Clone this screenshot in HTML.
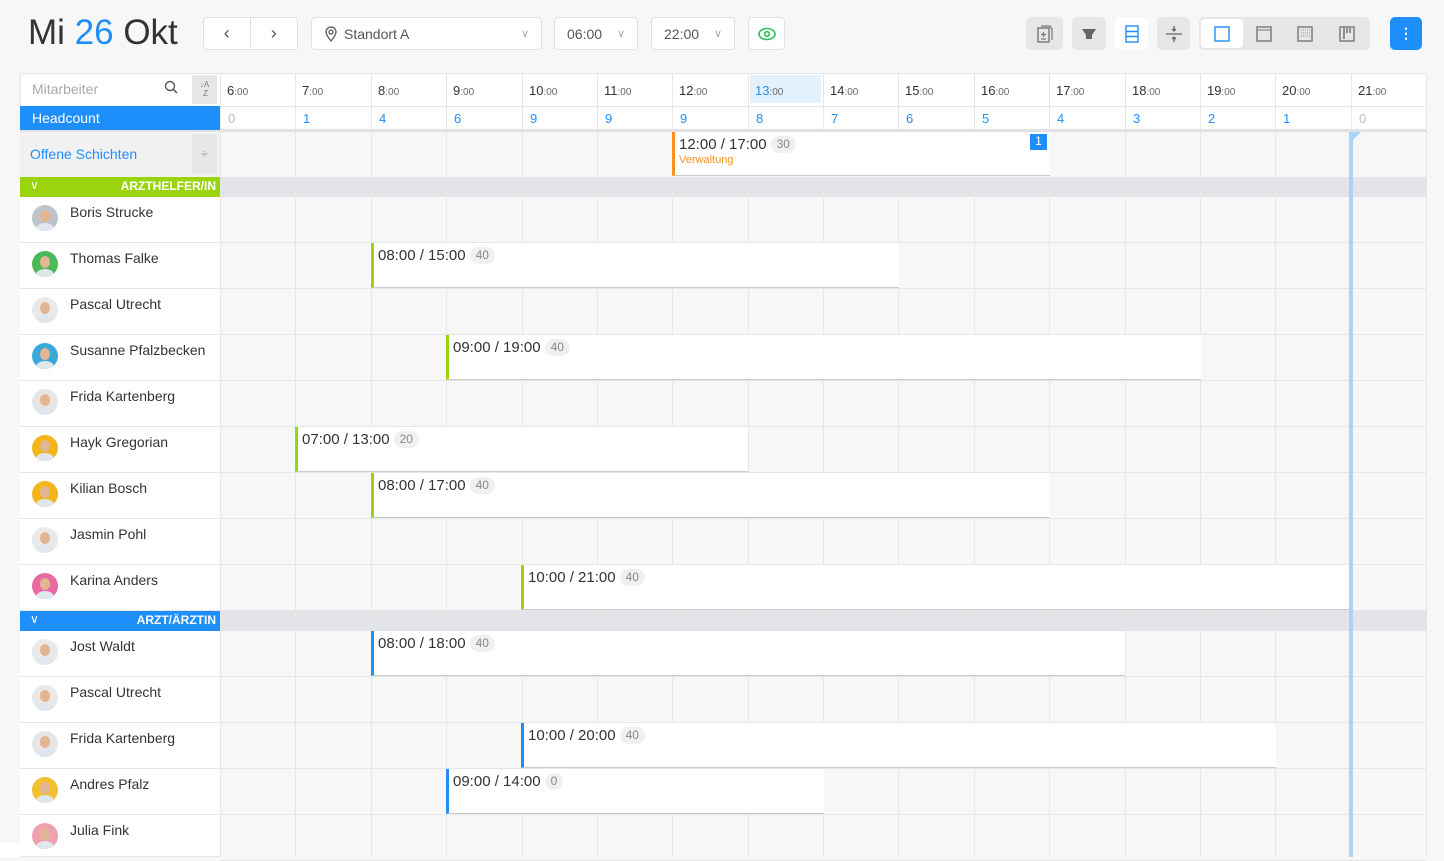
<!DOCTYPE html>
<html><head><meta charset="utf-8"><style>
*{box-sizing:border-box;margin:0;padding:0}
body{width:1444px;height:857px;background:#f7f7f7;font-family:"Liberation Sans",sans-serif;position:relative;overflow:hidden;color:#333}
.a{position:absolute}
.btn{position:absolute;background:#fff;border:1px solid #e0e0e0;border-radius:4px;top:17px;height:33px;font-size:14px;color:#555;display:flex;align-items:center}
.ib{position:absolute;top:17px;height:33px;border-radius:5px;background:#e7e7e7;display:flex;align-items:center;justify-content:center}
.vl{position:absolute;width:1px;background:#e6e6e6}
.hr{position:absolute;font-size:13px;color:#333;top:83px}
.hr small{font-size:10px;color:#666}
.hc{position:absolute;top:111px;font-size:13px;color:#1e8ffa}
.name{position:absolute;left:20px;width:200px;background:#fff;border-bottom:1px solid #e6e6e6;font-size:14px;color:#333}
.name span{position:absolute;left:50px;top:7px}
.av{position:absolute;left:12px;top:8px;width:26px;height:26px;border-radius:50%;overflow:hidden}
.av i{position:absolute;left:8px;top:5px;width:10px;height:12px;border-radius:50%;background:#e2b593}
.av b{position:absolute;left:4px;top:18px;width:18px;height:12px;border-radius:50%;background:#dfe6ee}
.rowl{position:absolute;left:220px;width:1206px;height:1px;background:#e6e6e6}
.sh{position:absolute;background:#fff;border-left:3px solid #99d40e;border-bottom:1px solid #ccc;font-size:15px;color:#333;padding:4px 0 0 4px}
.sh em{font-style:normal;display:inline-block;background:#f0f0f0;color:#888;border-radius:9px;padding:0 6px;font-size:12px;margin-left:4px;line-height:17px;vertical-align:1px}
.blue{border-left-color:#1e8ffa}
</style></head><body>
<div class="a" style="left:28px;top:13px;font-size:35px;color:#333">Mi <span style="color:#1e8ffa">26</span> Okt</div>
<div class="btn" style="left:203px;width:95px"><div style="width:47px;height:100%;border-right:1px solid #e0e0e0;text-align:center;line-height:31px;font-size:18px">‹</div><div style="width:47px;text-align:center;font-size:18px">›</div></div>
<div class="btn" style="left:311px;width:231px;padding-left:12px"><svg width="14" height="16" viewBox="0 0 14 16"><path d="M7 15C3 10 2 8 2 6a5 5 0 0110 0c0 2-1 4-5 9z" fill="none" stroke="#555" stroke-width="1.3"/><circle cx="7" cy="6" r="2" fill="none" stroke="#555" stroke-width="1.3"/></svg><span style="margin-left:6px">Standort A</span><span style="position:absolute;right:12px;color:#aaa;font-size:11px">∨</span></div>
<div class="btn" style="left:554px;width:84px;padding-left:12px">06:00<span style="position:absolute;right:12px;color:#aaa;font-size:11px">∨</span></div>
<div class="btn" style="left:651px;width:84px;padding-left:12px">22:00<span style="position:absolute;right:12px;color:#aaa;font-size:11px">∨</span></div>
<div class="btn" style="left:748px;width:37px;justify-content:center"><svg width="18" height="14"><ellipse cx="9" cy="7" rx="8" ry="5.5" fill="none" stroke="#2bbf5a" stroke-width="1.6"/><circle cx="9" cy="7" r="2.3" fill="none" stroke="#2bbf5a" stroke-width="1.6"/></svg></div>
<div class="ib" style="left:1026px;width:37px"><svg width="18" height="20"><rect x="2" y="4" width="11" height="14" fill="none" stroke="#777" stroke-width="1.4"/><path d="M5 2h9l2 3v11" fill="none" stroke="#777" stroke-width="1.2"/><path d="M7.5 8v5M5 10.5h5M5 15h5" stroke="#777" stroke-width="1.2"/></svg></div>
<div class="ib" style="left:1072px;width:34px"><svg width="16" height="14"><path d="M1 2h14l-4 6v4H5V8z" fill="#666"/></svg></div>
<div class="ib" style="left:1115px;width:33px;background:#fff"><svg width="14" height="18"><rect x="1" y="1" width="12" height="16" fill="none" stroke="#1e8ffa" stroke-width="1.4"/><path d="M1 6.5h12M1 11.5h12" stroke="#1e8ffa" stroke-width="1.4"/></svg></div>
<div class="ib" style="left:1157px;width:33px"><svg width="18" height="18"><path d="M1 9h16M9 1v5M9 12v5M7 4l2 2 2-2M7 14l2-2 2 2" stroke="#666" stroke-width="1.3" fill="none"/></svg></div>
<div class="ib" style="left:1199px;width:171px;justify-content:flex-start;padding:2px">
<div style="width:42px;height:29px;background:#fff;border-radius:4px;display:flex;align-items:center;justify-content:center"><svg width="16" height="16"><rect x="1" y="1" width="14" height="14" fill="none" stroke="#1e8ffa" stroke-width="1.4"/></svg></div>
<div style="width:42px;display:flex;justify-content:center"><svg width="16" height="16"><rect x="1" y="1" width="14" height="14" fill="none" stroke="#777" stroke-width="1.4"/><path d="M1 4h14" stroke="#777"/></svg></div>
<div style="width:42px;display:flex;justify-content:center"><svg width="16" height="16"><rect x="1" y="1" width="14" height="14" fill="none" stroke="#777" stroke-width="1.4"/><path d="M4 4h9M4 7h9M4 10h9" stroke="#999" stroke-dasharray="1 1"/></svg></div>
<div style="width:42px;display:flex;justify-content:center"><svg width="16" height="16"><rect x="1" y="1" width="14" height="14" fill="none" stroke="#777" stroke-width="1.4"/><path d="M5 2v11M8 2v5M11 2v5" stroke="#777" stroke-width="1.6"/></svg></div>
</div>
<div class="ib" style="left:1390px;width:32px;background:#1e8ffa;color:#fff;font-size:14px;font-weight:bold">⋮</div>

<div class="a" style="left:20px;top:73px;width:1407px;height:784px;background:#f7f7f7;border:1px solid #e6e6e6;border-bottom:none"></div>
<div class="a" style="left:20px;top:73px;width:1407px;height:57px;background:#fff;border:1px solid #e6e6e6"></div>
<div class="a" style="left:20px;top:106px;width:1407px;height:1px;background:#e6e6e6"></div>
<div class="a" style="left:20px;top:129px;width:1407px;height:3px;background:#e1e1e4"></div>
<div class="a" style="left:750px;top:75px;width:71px;height:28px;background:#e3f1fd"></div>
<div class="a" style="left:32px;top:81px;font-size:14px;color:#aaa">Mitarbeiter</div>
<div class="a" style="left:164px;top:80px"><svg width="14" height="14"><circle cx="6" cy="6" r="4.5" fill="none" stroke="#555" stroke-width="1.4"/><path d="M9.5 9.5l3.5 3.5" stroke="#555" stroke-width="1.5"/></svg></div>
<div class="a" style="left:192px;top:75px;width:25px;height:29px;background:#e7e7e7;font-size:8px;color:#777;text-align:center;line-height:9px;padding-top:5px">↓A<br>&nbsp;Z</div>
<div class="a" style="left:20px;top:106px;width:200px;height:24px;background:#1e8ffa;color:#fff;font-size:14px;padding:4px 0 0 12px">Headcount</div>
<div class="a" style="left:20px;top:132px;width:200px;height:45px;background:#f1f1f1;color:#1e8ffa;font-size:14px;padding:14px 0 0 10px">Offene Schichten</div>
<div class="a" style="left:192px;top:134px;width:25px;height:40px;background:#e7e7e7;color:#999;text-align:center;line-height:40px;font-size:12px">÷</div>
<div class="a" style="left:20px;top:177px;width:1407px;height:20px;background:#e3e4e8"></div>
<div class="a" style="left:20px;top:177px;width:200px;height:20px;background:#99d40e;color:#fff;font-size:12px;font-weight:bold;text-align:right;padding:2px 4px 0 0">ARZTHELFER/IN<span style="position:absolute;left:10px;top:1px;font-weight:normal">∨</span></div>
<div class="a" style="left:20px;top:611px;width:1407px;height:20px;background:#e3e4e8"></div>
<div class="a" style="left:20px;top:611px;width:200px;height:20px;background:#1e8ffa;color:#fff;font-size:12px;font-weight:bold;text-align:right;padding:2px 4px 0 0">ARZT/ÄRZTIN<span style="position:absolute;left:10px;top:1px;font-weight:normal">∨</span></div>

<div id="g"></div>
<div class="a" style="left:0;top:843px;width:20px;height:14px;background:#fff"></div>

<div class="sh" style="left:672px;top:132px;width:378px;height:44px;border-left-color:#f7931e">12:00 / 17:00<em>30</em><div style="font-size:11px;color:#f7931e;margin-top:1px">Verwaltung</div><div style="position:absolute;right:3px;top:2px;width:17px;height:16px;background:#1e8ffa;color:#fff;font-size:12px;text-align:center">1</div></div>
<div class="sh" style="left:371px;top:243px;width:528px;height:45px">08:00 / 15:00<em>40</em></div>
<div class="sh" style="left:446px;top:335px;width:755px;height:45px">09:00 / 19:00<em>40</em></div>
<div class="sh" style="left:295px;top:427px;width:453px;height:45px">07:00 / 13:00<em>20</em></div>
<div class="sh" style="left:371px;top:473px;width:679px;height:45px">08:00 / 17:00<em>40</em></div>
<div class="sh" style="left:521px;top:565px;width:830px;height:45px">10:00 / 21:00<em>40</em></div>
<div class="sh blue" style="left:371px;top:631px;width:754px;height:45px">08:00 / 18:00<em>40</em></div>
<div class="sh blue" style="left:521px;top:723px;width:755px;height:45px">10:00 / 20:00<em>40</em></div>
<div class="sh blue" style="left:446px;top:769px;width:378px;height:45px">09:00 / 14:00<em>0</em></div>
<div class="a" style="left:1349px;top:132px;width:4px;height:725px;background:#a8d3fb"></div>
<div class="a" style="left:1349px;top:132px;width:0;height:0;border-top:12px solid #a8d3fb;border-right:12px solid transparent"></div>
<script>
var g='',W=75.375,hc=[0,1,4,6,9,9,9,8,7,6,5,4,3,2,1,0];
for(var i=0;i<16;i++){var x=220+i*W;
g+='<div class="vl" style="left:'+Math.round(x)+'px;top:73px;height:784px"></div>';
g+='<div class="hr" style="left:'+Math.round(x+7)+'px;'+(i==7?'color:#1e8ffa':'')+'">'+(i+6)+'<small>:00</small></div>';
g+='<div class="hc" style="left:'+Math.round(x+8)+'px;'+(hc[i]==0?'color:#bbb':'')+'">'+hc[i]+'</div>';}
var p=[['Boris Strucke',197,'#bfc3c7'],['Thomas Falke',243,'#4cb85a'],['Pascal Utrecht',289,'#e9e9e9'],['Susanne Pfalzbecken',335,'#3aa8d8'],['Frida Kartenberg',381,'#e6e6e6'],['Hayk Gregorian',427,'#f2b51c'],['Kilian Bosch',473,'#f2b51c'],['Jasmin Pohl',519,'#e9e9e9'],['Karina Anders',565,'#e86aa0'],['Jost Waldt',631,'#e9e9e9'],['Pascal Utrecht',677,'#e9e9e9'],['Frida Kartenberg',723,'#e6e6e6'],['Andres Pfalz',769,'#f2c030'],['Julia Fink',815,'#f0a0b0']];
p.forEach(function(r){g+='<div class="name" style="top:'+r[1]+'px;height:'+(r[1]==815?42:46)+'px"><div class="av" style="background:'+r[2]+'"><i></i><b></b></div><span>'+r[0]+'</span></div>';
g+='<div class="rowl" style="top:'+(r[1]+45)+'px"></div>';});
document.getElementById('g').innerHTML=g;
</script>
</body></html>
